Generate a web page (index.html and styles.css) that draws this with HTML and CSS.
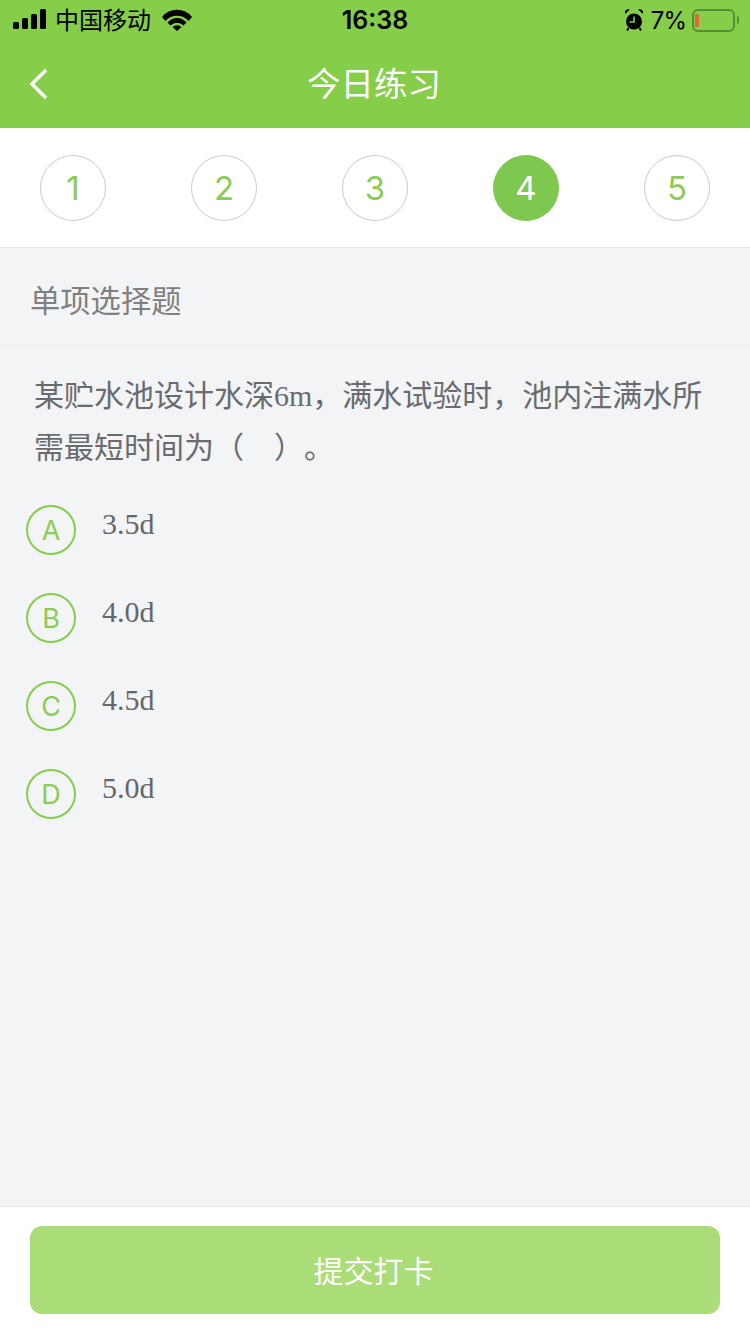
FILE: index.html
```html
<!DOCTYPE html>
<html lang="zh-CN">

<head>
    <meta charset="UTF-8">
    <meta name="viewport" content="width=device-width, initial-scale=1.0">
    <title>今日练习</title>
    <link rel="stylesheet" href="styles.css">
</head>

<body>
    <div class="page">
        <!-- Barra de status -->
        <div class="status-bar">
            <div class="status-left">
                <span class="signal"><i class="s1"></i><i class="s2"></i><i class="s3"></i><i class="s4"></i></span>
                <span class="carrier">中国移动</span>
                <svg class="wifi" width="30" height="22" viewBox="0 0 30 22">
                    <path d="M0 8 A19 19 0 0 1 30 8 L26.5 12 A15 15 0 0 0 3.5 12 Z" fill="#000"/>
                    <path d="M5.5 13.5 A12.5 12.5 0 0 1 24.5 13.5 L21.5 16.5 A9 9 0 0 0 8.5 16.5 Z" fill="#000"/>
                    <path d="M10.5 18 A7 7 0 0 1 19.5 18 L15 22 Z" fill="#000"/>
                </svg>
            </div>
            <div class="status-time">16:38</div>
            <div class="status-right">
                <svg class="alarm" width="18" height="22" viewBox="0 0 18 22">
                    <circle cx="9" cy="12.5" r="8" fill="#000"/>
                    <path d="M9 7.5 V13 H4.5" stroke="#86cd4a" stroke-width="1.6" fill="none"/>
                    <path d="M0 5 A3.6 3.6 0 0 1 5 0.6 Z M18 5 A3.6 3.6 0 0 0 13 0.6 Z" fill="#000"/>
                    <path d="M3.5 19 L2 21.5 M14.5 19 L16 21.5" stroke="#000" stroke-width="2"/>
                </svg>
                <span class="battery-pct">7%</span>
                <span class="battery"><span class="battery-level"></span></span>
                <span class="battery-tip"></span>
            </div>
        </div>

        <!-- Cabecalho -->
        <div class="nav-bar">
            <svg class="back" width="20" height="32" viewBox="0 0 20 32">
                <path d="M17 2 L3 16 L17 30" stroke="#fff" stroke-width="3.4" fill="none"/>
            </svg>
            <div class="nav-title">今日练习</div>
        </div>

        <!-- Numeros das questoes -->
        <div class="steps">
            <div class="step">1</div>
            <div class="step">2</div>
            <div class="step">3</div>
            <div class="step active">4</div>
            <div class="step">5</div>
        </div>

        <div class="section-title">单项选择题</div>

        <div class="content">
            <p class="question">某贮水池设计水深6m，满水试验时，池内注满水所需最短时间为（&nbsp;&nbsp;&nbsp;&nbsp;）。</p>

            <div class="option">
                <div class="option-key">A</div>
                <div class="option-text">3.5d</div>
            </div>
            <div class="option">
                <div class="option-key">B</div>
                <div class="option-text">4.0d</div>
            </div>
            <div class="option">
                <div class="option-key">C</div>
                <div class="option-text">4.5d</div>
            </div>
            <div class="option">
                <div class="option-key">D</div>
                <div class="option-text">5.0d</div>
            </div>
        </div>

        <!-- Botao de envio -->
        <div class="footer">
            <button class="submit">提交打卡</button>
        </div>
    </div>
</body>

</html>
```

FILE: styles.css
```css
* {
    box-sizing: border-box;
}

body {
    margin: 0;
    font-family: "Liberation Sans", "Noto Sans CJK SC", sans-serif;
    background-color: #f3f4f6;
}

.page {
    width: 750px;
    height: 1334px;
    display: flex;
    flex-direction: column;
    overflow: hidden;
}

.status-bar {
    height: 40px;
    background-color: #86cd4a;
    display: flex;
    align-items: center;
    justify-content: space-between;
    padding: 0 11px 0 13px;
    color: #000;
    position: relative;
}

.status-left,
.status-right {
    display: flex;
    align-items: center;
}

.signal {
    display: flex;
    align-items: flex-end;
    gap: 3px;
    height: 20px;
    margin: 0 9px 2px 0;
}

.signal i {
    display: block;
    width: 6px;
    border-radius: 1.5px;
    background-color: #000;
}

.signal .s1 { height: 7px; }
.signal .s2 { height: 11px; }
.signal .s3 { height: 15px; }
.signal .s4 { height: 20px; }

.carrier {
    font-size: 24px;
    margin: 0 11px 3px 0;
}

.wifi {
    margin-bottom: 1px;
}

.status-time {
    position: absolute;
    left: 0;
    right: 0;
    text-align: center;
    font-family: Inter, sans-serif;
    font-size: 25px;
    font-weight: 600;
}

.alarm {
    margin-right: 8px;
}

.battery-pct {
    font-family: Inter, sans-serif;
    font-size: 24px;
    letter-spacing: -1px;
    margin-right: 6px;
}

.battery {
    display: block;
    width: 43px;
    height: 23px;
    border: 2px solid #568f33;
    border-radius: 6px;
    padding: 3px 1px;
}

.battery-level {
    display: block;
    width: 4px;
    height: 13px;
    background-color: #e8623a;
}

.battery-tip {
    display: block;
    width: 2px;
    height: 8px;
    margin-left: 2px;
    background-color: #568f33;
    border-radius: 0 2px 2px 0;
}

.nav-bar {
    height: 88px;
    background-color: #86cd4a;
    display: flex;
    align-items: center;
    justify-content: center;
    position: relative;
}

.back {
    position: absolute;
    left: 29px;
    top: 28px;
}

.nav-title {
    color: #fff;
    font-size: 33.5px;
    padding: 0 2px 5px 0;
}

.steps {
    height: 120px;
    background-color: #fff;
    border-bottom: 1px solid #e6e7e9;
    display: flex;
    align-items: center;
    justify-content: space-between;
    padding: 0 40px;
}

.step {
    width: 66px;
    height: 66px;
    border: 1px solid #c9cbcd;
    border-radius: 50%;
    display: flex;
    align-items: center;
    justify-content: center;
    color: #8ccb55;
    font-family: Inter, sans-serif;
    font-size: 33px;
}

.step.active {
    background-color: #7ec850;
    border-color: #7ec850;
    color: #fff;
}

.section-title {
    height: 98px;
    padding: 4px 0 0 30px;
    display: flex;
    align-items: center;
    border-bottom: 1px solid #e9eaec;
    font-size: 30.3px;
    color: #808080;
}

.content {
    flex: 1;
    padding: 24px 35px 0 26px;
}

.question {
    margin: 0 0 31px 8px;
    font-family: "Liberation Serif", "Noto Sans CJK SC", serif;
    font-size: 30px;
    line-height: 52px;
    color: #696b6e;
    text-spacing-trim: space-all;
}

.option {
    display: flex;
    height: 88px;
}

.option-key {
    width: 50px;
    height: 50px;
    border: 2px solid #86cd4a;
    border-radius: 50%;
    display: flex;
    align-items: center;
    justify-content: center;
    color: #8ccb55;
    font-family: Inter, sans-serif;
    font-size: 27px;
    margin-right: 26px;
}

.option-text {
    font-family: "Liberation Serif", serif;
    font-size: 30px;
    line-height: 38px;
    color: #66676a;
}

.footer {
    height: 128px;
    background-color: #fff;
    border-top: 1px solid #e6e7e9;
    padding: 19px 30px 0;
}

.submit {
    display: block;
    width: 100%;
    height: 88px;
    padding: 0 3px 3px 0;
    border: none;
    border-radius: 12px;
    background-color: #aadc78;
    color: #fff;
    font-family: inherit;
    font-size: 30px;
}
```
